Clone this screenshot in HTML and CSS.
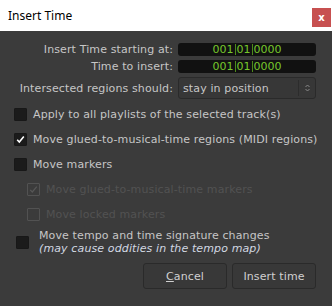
FILE: index.html
```html
<!DOCTYPE html>
<html lang="en">
<head>
    <meta charset="UTF-8">
    <title>Insert Time</title>
    <link rel="stylesheet" href="styles.css">
</head>
<body>

    <div class="titlebar">
        <span class="title">Insert Time</span>
        <span class="close">x</span>
    </div>

    <div class="dialog">
        <div class="fields">
            <label>Insert Time starting at:</label>
            <div class="clock">001<i></i>01<i></i>0000</div>
            <label>Time to insert:</label>
            <div class="clock">001<i></i>01<i></i>0000</div>
            <label>Intersected regions should:</label>
            <div class="select">
                <span class="select-text">stay in position</span>
                <span class="arrows">
                    <svg width="5" height="8" viewBox="0 0 5 8"><path d="M0.5 3 L2.5 1 L4.5 3 M0.5 5 L2.5 7 L4.5 5" fill="none" stroke="#8a8a8a" stroke-width="1"/></svg>
                </span>
            </div>
        </div>

        <div class="options">
            <div class="check"><span class="box"></span>Apply to all playlists of the selected track(s)</div>
            <div class="check"><span class="box checked"><svg width="11" height="11" viewBox="0 0 11 11"><path d="M2.2 5.8 L4.3 8 L8.8 2.6" fill="none" stroke="#fff" stroke-width="1.6"/></svg></span>Move glued-to-musical-time regions (MIDI regions)</div>
            <div class="check"><span class="box"></span>Move markers</div>
            <div class="check sub disabled"><span class="box"><svg width="11" height="11" viewBox="0 0 11 11"><path d="M2.2 5.8 L4.3 8 L8.8 2.6" fill="none" stroke="#575757" stroke-width="1.2"/></svg></span>Move glued-to-musical-time markers</div>
            <div class="check sub disabled"><span class="box"></span>Move locked markers</div>
            <div class="check tempo"><span class="box"></span>
                <div class="tempo-text">
                    Move tempo and time signature changes<br>
                    <em>(may cause oddities in the tempo map)</em>
                </div>
            </div>
        </div>

        <div class="buttons">
            <button><u>C</u>ancel</button>
            <button>Insert time</button>
        </div>
    </div>

</body>
</html>
```

FILE: styles.css
```css
body {
    margin: 0;
    width: 332px;
    height: 306px;
    overflow: hidden;
    background-color: #3b3b3b;
    color: #c6c6c6;
    font-family: "DejaVu Sans", sans-serif;
    font-size: 11px;
    letter-spacing: 0.12px;
}

.titlebar {
    height: 31px;
    background-color: #fff;
    display: flex;
    justify-content: space-between;
    align-items: center;
    padding-left: 8px;
}

.title {
    font-family: "Noto Sans", sans-serif;
    font-size: 12px;
    letter-spacing: 0;
    color: #000;
}

.close {
    align-self: flex-start;
    margin-top: 8px;
    margin-right: 1px;
    width: 19px;
    height: 19px;
    background-color: #c75050;
    color: #fff;
    font-weight: bold;
    font-size: 10px;
    display: flex;
    align-items: center;
    justify-content: center;
}

.dialog {
    padding: 12px 16px 0 0;
}

.fields {
    display: grid;
    grid-template-columns: 1fr 138px;
    column-gap: 5px;
    row-gap: 4px;
    align-items: center;
}

.fields label {
    text-align: right;
    line-height: 13px;
    white-space: nowrap;
}

.clock {
    height: 13px;
    background-color: #111;
    border-radius: 3px;
    color: #76c82b;
    line-height: 13px;
    letter-spacing: 0;
    display: flex;
    justify-content: center;
}

.clock i {
    width: 1px;
    margin: 1px 1px;
    background-color: #4d8a1a;
}

.select {
    height: 22px;
    box-sizing: border-box;
    background-color: #373737;
    border: 1px solid #2a2a2a;
    border-radius: 3px;
    display: flex;
    align-items: center;
    padding-left: 4px;
}

.select-text {
    flex: 1;
}

.arrows {
    height: 16px;
    width: 16px;
    border-left: 1px solid #2c2c2c;
    display: flex;
    align-items: center;
    justify-content: center;
}

.options {
    margin-top: 9px;
    display: flex;
    flex-direction: column;
    gap: 12px;
}

.check {
    display: flex;
    align-items: center;
    gap: 6px;
    padding-left: 14px;
    line-height: 13px;
    white-space: nowrap;
}

.box {
    flex: none;
    width: 13px;
    height: 13px;
    box-sizing: border-box;
    background-color: #1b1b1b;
    border: 1px solid #181818;
    border-radius: 1px;
    display: flex;
    align-items: center;
    justify-content: center;
}

.check.sub {
    padding-left: 27px;
}

.check.disabled {
    color: #525252;
}

.check.disabled .box {
    background-color: transparent;
    border-color: #525252;
}

.check.tempo {
    margin-top: -4px;
    padding-left: 16px;
    gap: 10px;
}

.tempo-text em {
    color: #d2d8e2;
}

.buttons {
    margin-top: 8px;
    display: flex;
    justify-content: flex-end;
    gap: 5px;
}

.buttons button {
    width: 84px;
    height: 26px;
    background-color: #383838;
    border: 1px solid #2a2a2a;
    border-radius: 3px;
    color: #d0d0d0;
    font-family: "DejaVu Sans", sans-serif;
    font-size: 11px;
    letter-spacing: 0.12px;
    padding: 0;
}
```
